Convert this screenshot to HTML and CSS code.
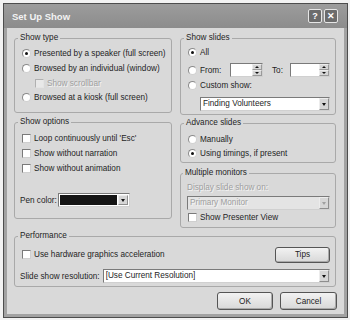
FILE: index.html
```html
<!DOCTYPE html>
<html>
<head>
  <meta charset="utf-8">
  <link rel="stylesheet" href="styles.css">
</head>
<body>
  <div class="window">
    <div class="titlebar">
      <span class="title">Set Up Show</span>
      <div class="caption-btns">
        <span class="cbtn">?</span>
        <span class="cbtn">&#x2715;</span>
      </div>
    </div>

    <div class="client">
      <div class="columns">
        <div class="col col-left">
          <fieldset class="group show-type">
            <legend>Show type</legend>
            <div class="opt"><span class="radio checked"></span>Presented by a speaker (full screen)</div>
            <div class="opt"><span class="radio"></span>Browsed by an individual (window)</div>
            <div class="opt sub disabled"><span class="check"></span>Show scrollbar</div>
            <div class="opt"><span class="radio"></span>Browsed at a kiosk (full screen)</div>
          </fieldset>

          <fieldset class="group show-options">
            <legend>Show options</legend>
            <div class="opt"><span class="check"></span>Loop continuously until 'Esc'</div>
            <div class="opt"><span class="check"></span>Show without narration</div>
            <div class="opt"><span class="check"></span>Show without animation</div>
            <div class="pen-row">
              <span class="pen-label">Pen color:</span>
              <div class="combo pen-combo">
                <span class="swatch"></span>
                <span class="combo-arrow"></span>
              </div>
            </div>
          </fieldset>
        </div>

        <div class="col col-right">
          <fieldset class="group show-slides">
            <legend>Show slides</legend>
            <div class="opt"><span class="radio checked"></span>All</div>
            <div class="opt from-row">
              <span class="radio"></span><span class="from-label">From:</span>
              <div class="spin"><span class="spin-btns"><span class="spin-up"></span><span class="spin-down"></span></span></div>
              <span class="to-label">To:</span>
              <div class="spin spin-to"><span class="spin-btns"><span class="spin-up"></span><span class="spin-down"></span></span></div>
            </div>
            <div class="opt custom-row"><span class="radio"></span>Custom show:</div>
            <div class="combo custom-combo">
              <span class="combo-text">Finding Volunteers</span>
              <span class="combo-arrow"></span>
            </div>
          </fieldset>

          <fieldset class="group advance">
            <legend>Advance slides</legend>
            <div class="opt"><span class="radio"></span>Manually</div>
            <div class="opt"><span class="radio checked"></span>Using timings, if present</div>
          </fieldset>

          <fieldset class="group monitors">
            <legend>Multiple monitors</legend>
            <div class="display-label disabled">Display slide show on:</div>
            <div class="combo monitor-combo disabled">
              <span class="combo-text">Primary Monitor</span>
              <span class="combo-arrow"></span>
            </div>
            <div class="opt"><span class="check"></span>Show Presenter View</div>
          </fieldset>
        </div>
      </div>

      <fieldset class="group performance">
        <legend>Performance</legend>
        <div class="perf-row">
          <div class="opt"><span class="check"></span>Use hardware graphics acceleration</div>
          <button class="btn tips-btn">Tips</button>
        </div>
        <div class="res-row">
          <span class="res-label">Slide show resolution:</span>
          <div class="combo res-combo">
            <span class="combo-text">[Use Current Resolution]</span>
            <span class="combo-arrow"></span>
          </div>
        </div>
      </fieldset>

      <div class="actions">
        <button class="btn ok-btn">OK</button>
        <button class="btn cancel-btn">Cancel</button>
      </div>
    </div>
  </div>
</body>
</html>
```

FILE: styles.css
```css
body {
  margin: 0;
  background: #f2f2f2;
  font-family: "Liberation Sans", Arial, sans-serif;
  font-size: 8.2px;
  color: #1e1e1e;
}
.window {
  margin: 3px;
  width: 345px;
  height: 315px;
  box-sizing: border-box;
  border: 1px solid #4d4d4d;
  background: #a2a2a2;
  padding: 0 3px 3px;
  display: flex;
  flex-direction: column;
}
.titlebar {
  height: 24px;
  margin: 0 -3px;
  background: linear-gradient(#9c9c9c, #8c8c8c);
  display: flex;
  align-items: center;
  padding: 0 9px 0 8px;
}
.title {
  flex: 1;
  color: #f2f2f2;
  font-weight: bold;
  font-size: 9.5px;
}
.caption-btns {
  display: flex;
  gap: 2px;
}
.cbtn {
  width: 14px;
  height: 14px;
  box-sizing: border-box;
  border: 1px solid #e6e6e6;
  border-radius: 2px;
  background: #6c6c6c;
  color: #fff;
  font-weight: bold;
  font-size: 9px;
  display: flex;
  align-items: center;
  justify-content: center;
}
.client {
  flex: 1;
  background: #d9d9d9;
  padding: 5px 8px 0 7px;
}
.columns {
  display: flex;
  gap: 8px;
  align-items: flex-start;
}
.col {
  display: flex;
  flex-direction: column;
}
.col-left {
  width: 158px;
}
.col-right {
  width: 156px;
}
.group {
  margin: 0;
  min-width: 0;
  border: 1px solid #a9a9a9;
  border-radius: 3px;
}
.group legend {
  padding: 0 2px;
  margin-left: -4px;
  line-height: 10px;
}
.opt {
  display: flex;
  align-items: center;
  gap: 3px;
  height: 15px;
  white-space: nowrap;
}
.radio {
  width: 9px;
  height: 9px;
  box-sizing: border-box;
  border-radius: 50%;
  border: 1px solid #8a8a8a;
  border-right-color: #d0d0d0;
  border-bottom-color: #d0d0d0;
  background: #fff;
  display: flex;
  align-items: center;
  justify-content: center;
  flex-shrink: 0;
}
.radio.checked::after {
  content: "";
  width: 3px;
  height: 3px;
  border-radius: 50%;
  background: #111;
}
.check {
  width: 9px;
  height: 9px;
  box-sizing: border-box;
  border: 1px solid #7a7a7a;
  border-right-color: #cfcfcf;
  border-bottom-color: #cfcfcf;
  background: #fff;
  flex-shrink: 0;
}
.disabled {
  color: #9e9e9e;
  text-shadow: 1px 1px 0 #f4f4f4;
}
.disabled .check {
  background: #e8e8e8;
  border-color: #b0b0b0 #e4e4e4 #e4e4e4 #b0b0b0;
}

/* left column */
.show-type {
  padding: 3px 6px 7px 7px;
}
.show-type .sub {
  padding-left: 13px;
  height: 14px;
}
.show-options {
  margin-top: 4px;
  padding: 4px 6px 11px 7px;
}
.pen-row {
  display: flex;
  align-items: center;
  margin-top: 17px;
  height: 14px;
}
.pen-label {
  margin-left: -2px;
  width: 38px;
}
.pen-combo {
  width: 72px;
  height: 13px;
  padding: 1px;
}
.swatch {
  flex: 1;
  margin-right: 1px;
  background: #141414;
}

/* right column */
.show-slides {
  padding: 2px 5px 3px 7px;
}
.show-slides .opt {
  height: 14px;
}
.from-row.opt {
  margin-top: 2px;
  height: 18px;
  gap: 0;
}
.from-label {
  margin-left: 3px;
  width: 30px;
}
.to-label {
  margin: 0 7px 0 9px;
}
.custom-row.opt {
  height: 13px;
}
.custom-combo {
  margin: 5px 0 0 12px;
}
.advance {
  margin-top: 3px;
  padding: 4px 5px 2px 7px;
}
.advance .opt,
.monitors .opt {
  height: 14px;
}
.monitors {
  margin-top: 5px;
  padding: 4px 5px 3px 6px;
}
.display-label {
  height: 12px;
  line-height: 12px;
}
.monitor-combo {
  margin-top: 2px;
  margin-bottom: 0;
}
.monitors .opt {
  margin-left: 1px;
}

/* inputs */
.spin {
  display: flex;
  width: 33px;
  height: 14px;
  box-sizing: border-box;
  border: 1px solid #7a7a7a;
  border-right-color: #d0d0d0;
  border-bottom-color: #d0d0d0;
  background: #fff;
}
.spin-to {
  width: 40px;
}
.spin-btns {
  margin-left: auto;
  width: 10px;
  display: flex;
  flex-direction: column;
}
.spin-up,
.spin-down {
  flex: 1;
  background: #d6d6d6;
  border: 1px solid #ececec;
  border-right-color: #9a9a9a;
  border-bottom-color: #9a9a9a;
  display: flex;
  align-items: center;
  justify-content: center;
}
.spin-up::after {
  content: "";
  border: 2px solid transparent;
  border-top: 0;
  border-bottom: 2px solid #111;
}
.spin-down::after {
  content: "";
  border: 2px solid transparent;
  border-bottom: 0;
  border-top: 2px solid #111;
}
.combo {
  display: flex;
  height: 14px;
  box-sizing: border-box;
  border: 1px solid #7a7a7a;
  border-right-color: #d0d0d0;
  border-bottom-color: #d0d0d0;
  background: #fff;
}
.combo-text {
  flex: 1;
  padding-left: 2px;
  line-height: 12px;
  white-space: nowrap;
  overflow: hidden;
}
.combo-arrow {
  width: 10px;
  margin: 0;
  background: #d6d6d6;
  border: 1px solid #ececec;
  border-right-color: #8e8e8e;
  border-bottom-color: #8e8e8e;
  box-sizing: border-box;
  display: flex;
  align-items: center;
  justify-content: center;
}
.combo-arrow::after {
  content: "";
  border: 2.5px solid transparent;
  border-bottom: 0;
  border-top: 3px solid #111;
}
.combo.disabled {
  background: #e4e4e4;
}
.combo.disabled .combo-arrow::after {
  border-top-color: #a0a0a0;
}

/* performance */
.performance {
  margin-top: 3px;
  padding: 5px 5px 3px 7px;
}
.perf-row {
  display: flex;
  justify-content: space-between;
  align-items: center;
  height: 17px;
}
.res-row {
  display: flex;
  align-items: center;
  margin-top: 6px;
  height: 14px;
}
.res-label {
  margin-left: -2px;
  margin-right: 3px;
  white-space: nowrap;
}
.res-combo {
  flex: 1;
}

/* buttons */
.btn {
  font: inherit;
  color: #222;
  padding: 0;
  border: 1px solid #555;
  border-radius: 3px;
  background: linear-gradient(#f2f2f2, #d8d8d8);
  box-shadow: inset -1px -1px 0 #aaa;
}
.tips-btn {
  width: 55px;
  height: 16px;
}
.actions {
  display: flex;
  justify-content: flex-end;
  gap: 7px;
  margin-top: 5px;
  margin-right: -1px;
}
.ok-btn {
  width: 56px;
  height: 18px;
}
.cancel-btn {
  width: 57px;
  height: 18px;
}
```
